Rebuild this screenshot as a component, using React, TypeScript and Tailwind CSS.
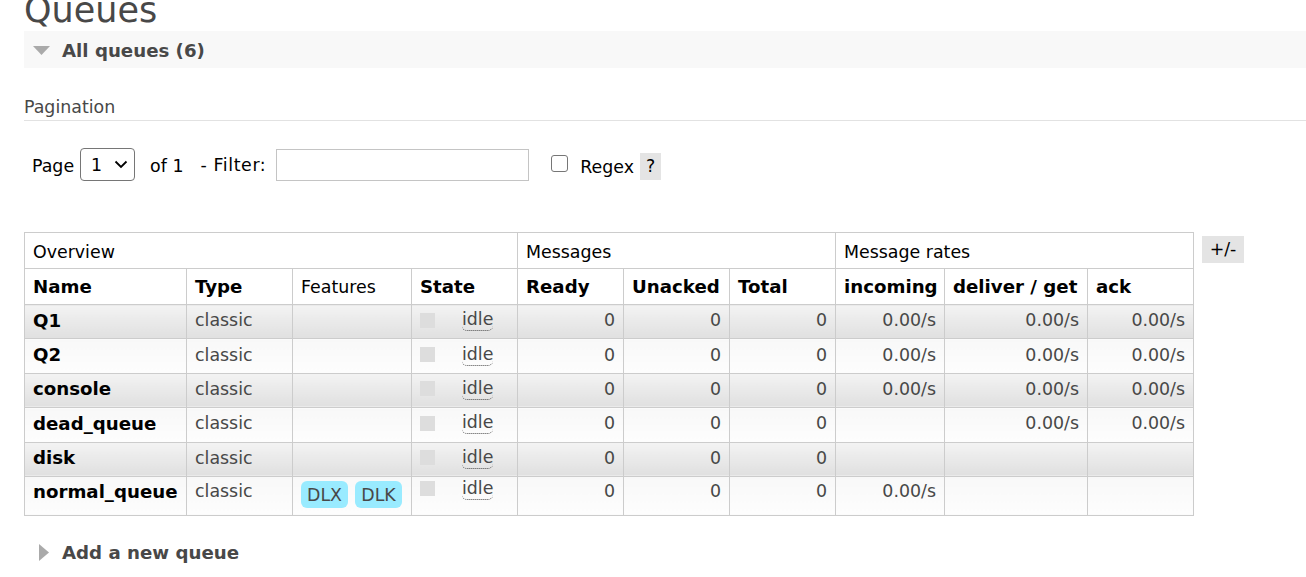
import React from 'react';

type Row = {
  name: string;
  features?: string[];
  ready: string;
  unacked: string;
  total: string;
  incoming: string;
  deliver: string;
  ack: string;
};

const rows: Row[] = [
  { name: 'Q1', ready: '0', unacked: '0', total: '0', incoming: '0.00/s', deliver: '0.00/s', ack: '0.00/s' },
  { name: 'Q2', ready: '0', unacked: '0', total: '0', incoming: '0.00/s', deliver: '0.00/s', ack: '0.00/s' },
  { name: 'console', ready: '0', unacked: '0', total: '0', incoming: '0.00/s', deliver: '0.00/s', ack: '0.00/s' },
  { name: 'dead_queue', ready: '0', unacked: '0', total: '0', incoming: '', deliver: '0.00/s', ack: '0.00/s' },
  { name: 'disk', ready: '0', unacked: '0', total: '0', incoming: '', deliver: '', ack: '' },
  { name: 'normal_queue', features: ['DLX', 'DLK'], ready: '0', unacked: '0', total: '0', incoming: '0.00/s', deliver: '', ack: '' },
];

const App = (): React.ReactElement => {
  return (
    <div className="w-[1306px] h-[577px] overflow-hidden bg-white font-['DejaVu_Sans',sans-serif] text-[17.4px] text-[#484848] pl-[24px]">
      <h1 className="mt-[-10px] leading-[40px] text-[35px] text-[#484848]">Queues</h1>

      <div className="mt-[1px] h-[37px] bg-[#f8f8f8] flex items-center">
        <svg width="17" height="9" viewBox="0 0 17 9" className="ml-[9px] mt-[2px]">
          <polygon points="0,0 17,0 8.5,9" fill="#aaaaaa" />
        </svg>
        <span className="ml-[12px] mt-[3px] font-bold text-[18.2px]">All queues (6)</span>
      </div>

      <div className="mt-[28px] leading-[22px] pb-[2px] border-b border-[#e2e2e2]">Pagination</div>

      <div className="mt-[27px] pl-[8px] flex items-center h-[33px] text-[#000]">
        <span className="mt-[3px]">Page</span>
        <div className="ml-[6px] w-[55px] h-[33px] rounded-[4px] border border-[#767676] flex items-center pl-[10px] pr-[6px] justify-between">
          <span className="mt-[2px]">1</span>
          <svg width="14" height="9" viewBox="0 0 14 9">
            <polyline points="1.5,1.5 7,7 12.5,1.5" fill="none" stroke="#000" strokeWidth="1.8" />
          </svg>
        </div>
        <span className="ml-[15px] mt-[3px]">of 1</span>
        <span className="ml-[17px] mt-[1px] tracking-[0.6px]">- Filter:</span>
        <div className="ml-[10px] w-[253px] h-[32px] border border-[#c4c4c4]" />
        <div className="ml-[22px] w-[17px] h-[17px] rounded-[3px] border border-[#767676] mt-[-3px]" />
        <span className="ml-[12px] mt-[5px]">Regex</span>
        <span className="ml-[6px] mt-[3px] w-[21px] h-[27px] bg-[#e4e4e4] flex items-center justify-center">?</span>
      </div>

      <div className="mt-[51px] flex items-start gap-[8px]">
        <table className="table-fixed w-[1169px] border-collapse">
          <colgroup>
            <col className="w-[162px]" />
            <col className="w-[106px]" />
            <col className="w-[119px]" />
            <col className="w-[106px]" />
            <col className="w-[106px]" />
            <col className="w-[106px]" />
            <col className="w-[106px]" />
            <col className="w-[109px]" />
            <col className="w-[143px]" />
            <col className="w-[106px]" />
          </colgroup>
          <thead className="text-[#000]">
            <tr className="h-[36px]">
              <th colSpan={4} className="border border-[#cccccc] px-[8px] pt-[3px] text-left font-normal">Overview</th>
              <th colSpan={3} className="border border-[#cccccc] px-[8px] pt-[3px] text-left font-normal">Messages</th>
              <th colSpan={3} className="border border-[#cccccc] px-[8px] pt-[3px] text-left font-normal">Message rates</th>
            </tr>
            <tr className="h-[36px] text-[18.2px]">
              <th className="border border-[#cccccc] px-[8px] pt-[1px] text-left font-bold">Name</th>
              <th className="border border-[#cccccc] px-[8px] pt-[1px] text-left font-bold">Type</th>
              <th className="border border-[#cccccc] px-[8px] pt-[1px] text-left font-normal text-[17.4px]">Features</th>
              <th className="border border-[#cccccc] px-[8px] pt-[1px] text-left font-bold">State</th>
              <th className="border border-[#cccccc] px-[8px] pt-[1px] text-left font-bold">Ready</th>
              <th className="border border-[#cccccc] px-[8px] pt-[1px] text-left font-bold">Unacked</th>
              <th className="border border-[#cccccc] px-[8px] pt-[1px] text-left font-bold">Total</th>
              <th className="border border-[#cccccc] px-[8px] pt-[1px] text-left font-bold whitespace-nowrap">incoming</th>
              <th className="border border-[#cccccc] px-[8px] pt-[1px] text-left font-bold whitespace-nowrap">deliver / get</th>
              <th className="border border-[#cccccc] px-[8px] pt-[1px] text-left font-bold">ack</th>
            </tr>
          </thead>
          <tbody>
            {rows.map((r, i) => {
              const odd = i % 2 === 0;
              const last = i === rows.length - 1;
              const cell = odd
                ? 'border border-[#cccccc] px-[8px] bg-linear-to-b from-[#f3f3f3] to-[#e0e0e0]'
                : 'border border-[#cccccc] px-[8px] bg-linear-to-b from-[#f8f8f8] to-[#fdfdfd]';
              const valign = last ? 'align-top pt-[1px]' : 'align-middle pb-[3px]';
              return (
                <tr key={r.name} className={last ? 'h-[39px]' : 'h-[34.4px]'}>
                  <td className={`${cell} ${valign} font-bold text-[18.2px] text-[#000] whitespace-nowrap`}>{r.name}</td>
                  <td className={`${cell} ${valign}`}>classic</td>
                  <td className={`${cell} ${valign}`}>
                    {r.features && (
                      <div className="flex gap-[7px] mt-[3px]">
                        {r.features.map((f) => (
                          <span key={f} className="w-[47px] h-[27px] pt-[1px] rounded-[6px] bg-[#99ebff] flex items-center justify-center">
                            {f}
                          </span>
                        ))}
                      </div>
                    )}
                  </td>
                  <td className={`${cell} ${valign}`}>
                    <div className="flex items-center">
                      <span className="w-[15px] h-[15px] bg-[#dddddd]" />
                      <span className="ml-[27px] leading-[21px] border-b border-dotted border-[#484848] rounded-b-[5px]">idle</span>
                    </div>
                  </td>
                  <td className={`${cell} ${valign} text-right`}>{r.ready}</td>
                  <td className={`${cell} ${valign} text-right`}>{r.unacked}</td>
                  <td className={`${cell} ${valign} text-right`}>{r.total}</td>
                  <td className={`${cell} ${valign} text-right`}>{r.incoming}</td>
                  <td className={`${cell} ${valign} text-right`}>{r.deliver}</td>
                  <td className={`${cell} ${valign} text-right`}>{r.ack}</td>
                </tr>
              );
            })}
          </tbody>
        </table>
        <span className="mt-[4px] w-[42px] h-[27px] bg-[#e4e4e4] flex items-center justify-center text-[#000]">+/-</span>
      </div>

      <div className="mt-[26px] flex items-center h-[22px]">
        <svg width="10" height="17" viewBox="0 0 10 17" className="ml-[15px]">
          <polygon points="0,0 10,8.5 0,17" fill="#aaaaaa" />
        </svg>
        <span className="ml-[13px] font-bold text-[18.2px]">Add a new queue</span>
      </div>
    </div>
  );
};

export default App;
